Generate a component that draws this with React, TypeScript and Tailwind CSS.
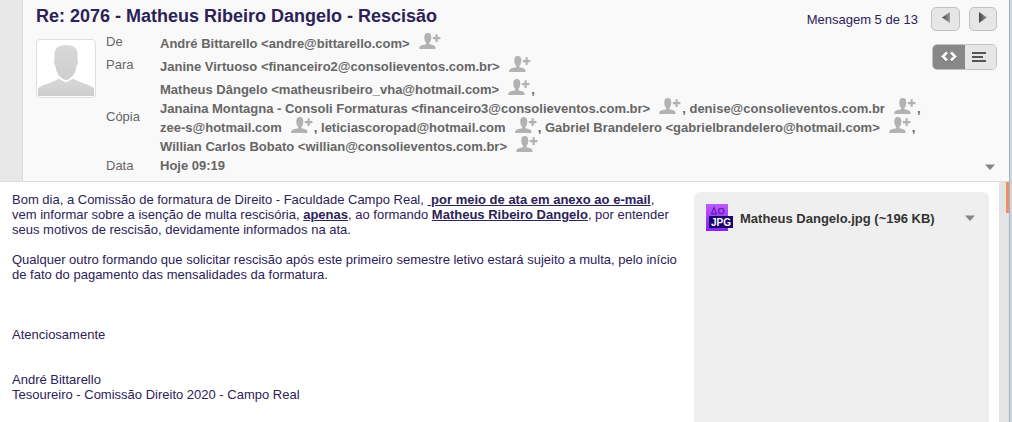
import React from "react";

type Contact = { label: string; suffix?: string };

function AddContact({ name }: { name: string }) {
  return (
    <button
      type="button"
      aria-label={`Adicionar ${name} aos contatos`}
      className="-mt-1 ml-2 inline-block h-4 w-6 align-[-1px]"
    >
      <svg viewBox="0 0 24 16" className="block h-4 w-6" fill="#b2b2b2">
        <path d="M9.800 0C7.500 0 6.300 1.500 6.300 4.200C6.300 6.800 7 8.800 8.200 9.800V11.200C5.500 11.700 1.500 12.500 1.300 14.500V16H17.500V14.500C17.300 12.500 14 11.700 11.400 11.200V9.800C12.600 8.800 13.300 6.800 13.300 4.200C13.300 1.500 12.100 0 9.800 0Z" />
        <path d="M17.500 1.300h2.200v2.700h2.700v2.200h-2.700v2.700h-2.200V6.200h-2.700V4h2.700Z" />
      </svg>
    </button>
  );
}

function Person({ label, suffix }: Contact) {
  return (
    <>
      <span className="whitespace-nowrap">
        <a href={`mailto:${label}`}>{label}</a>
        <AddContact name={label} />
        {suffix}
      </span>{" "}
    </>
  );
}

const copies: Contact[] = [
  { label: "Janaina Montagna - Consoli Formaturas <financeiro3@consolieventos.com.br>", suffix: "," },
  { label: "denise@consolieventos.com.br", suffix: "," },
  { label: "zee-s@hotmail.com", suffix: "," },
  { label: "leticiascoropad@hotmail.com", suffix: "," },
  { label: "Gabriel Brandelero <gabrielbrandelero@hotmail.com>", suffix: "," },
  { label: "Willian Carlos Bobato <willian@consolieventos.com.br>" },
];

function Avatar() {
  return (
    <div className="mt-[7px] h-[59px] w-15 shrink-0 overflow-hidden rounded border border-[#dedede] bg-white p-px">
      <svg viewBox="0 0 56 55" className="block h-full w-full" role="img" aria-label="Foto do contato">
        <defs>
          <linearGradient id="avatar" x2="0" y2="1">
            <stop stopColor="#d8d8d8" />
            <stop offset="1" stopColor="#cecece" />
          </linearGradient>
        </defs>
        <path
          fill="url(#avatar)"
          d="M28 4C21 4 16.500 7 16.500 13V18.500C15.300 19.500 16 24 17.500 25C18 30 19.500 33 22 35.500C24 37.500 26 39 28 39C30 39 32 37.500 34 35.500C36.500 33 38 30 38.500 25C40 24 40.700 19.500 39.500 18.500V12C39.500 7 35 4 28 4Z"
        />
        <path
          fill="url(#avatar)"
          d="M20.500 37.500C17 41 7 42.500 0 47V55H56V47C49 42.500 39 41 35.500 37.500L28 41.500Z"
        />
      </svg>
    </div>
  );
}

function CaretDown() {
  return (
    <svg viewBox="0 0 10 6" className="block h-1.5 w-2.5">
      <path d="M0 .5h10L5 6Z" fill="#858585" />
    </svg>
  );
}

function MessageNav() {
  return (
    <nav className="flex items-center gap-[9px] pt-[7px]">
      <span className="mr-1">Mensagem 5 de 13</span>
      <button
        type="button"
        aria-label="Mensagem anterior"
        className="flex h-6 w-[29px] items-center justify-center rounded-[5px] border border-[#c2c2c2] bg-[#e6e6e6]"
      >
        <svg viewBox="0 0 8 11" className="-mt-1 h-[11px] w-2">
          <defs>
            <linearGradient id="arrow">
              <stop stopColor="#444" />
              <stop offset="1" stopColor="#999" />
            </linearGradient>
          </defs>
          <path d="M8 0v11L0 5.500Z" fill="url(#arrow)" />
        </svg>
      </button>
      <button
        type="button"
        aria-label="Próxima mensagem"
        className="flex h-6 w-7 items-center justify-center rounded-[5px] border border-[#c2c2c2] bg-[#e6e6e6]"
      >
        <svg viewBox="0 0 8 11" className="-mt-1 h-[11px] w-2">
          <path d="M0 0v11l8-5.500Z" fill="url(#arrow)" />
        </svg>
      </button>
    </nav>
  );
}

function ViewToggle() {
  return (
    <div className="mt-3 flex h-[26px] overflow-hidden rounded-[5px] border border-[#c2c2c2]">
      <button
        type="button"
        aria-label="Exibir em HTML"
        className="flex w-8 items-center justify-center bg-[#888]"
      >
        <svg viewBox="0 0 18 12" className="h-3 w-[18px]" fill="none" strokeWidth="2.600">
          <path d="M7 2.500 3 6.500l4 4M11 2.500l4 4-4 4" stroke="#666" />
          <path d="M7 1.500 3 5.500l4 4M11 1.500l4 4-4 4" stroke="#fff" />
        </svg>
      </button>
      <button
        type="button"
        aria-label="Exibir em texto simples"
        className="flex w-[31px] items-center justify-center bg-[#e6e6e6] pr-1"
      >
        <svg viewBox="0 0 14 10" className="h-2.5 w-3.5" fill="#555">
          <path d="M0 0h14v2H0ZM0 4h11v2H0ZM0 8h14v2H0Z" />
        </svg>
      </button>
    </div>
  );
}

function Header() {
  return (
    <header className="flex border-b border-[#dcdcdc] bg-[#f9f9f9]">
      <div className="w-[23px] shrink-0 border-r border-[#dadada] bg-[#e8e8e8]" />
      <div className="min-w-0 flex-1 pr-3 pl-[13px]">
        <div className="flex min-h-8 items-start justify-between">
          <h1 className="pt-1 text-[18px] leading-6 font-bold">
            Re: 2076 - Matheus Ribeiro Dangelo - Rescisão
          </h1>
          <MessageNav />
        </div>
        <div className="flex">
          <div className="flex min-w-0 flex-1 gap-2.5 pb-[5px] text-[#666]">
            <Avatar />
            <dl className="grid flex-1 grid-cols-[54px_1fr]">
              <dt className="pt-0.5">De</dt>
              <dd className="leading-[23px] font-bold">
                <Person label="André Bittarello <andre@bittarello.com>" />
              </dd>
              <dt className="pt-0.5">Para</dt>
              <dd className="leading-[23px] font-bold">
                <div>
                  <Person label="Janine Virtuoso <financeiro2@consolieventos.com.br>" />
                </div>
                <div>
                  <Person label="Matheus Dângelo <matheusribeiro_vha@hotmail.com>" suffix="," />
                </div>
              </dd>
              <dt className="pt-2">Cópia</dt>
              <dd className="-mt-0.5 leading-[19px] font-bold">
                {copies.map((c) => (
                  <Person key={c.label} {...c} />
                ))}
              </dd>
              <dt className="leading-5">Data</dt>
              <dd className="leading-5 font-bold">Hoje 09:19</dd>
            </dl>
          </div>
          <div className="flex shrink-0 flex-col items-end pb-[11px]">
            <ViewToggle />
            <button type="button" aria-label="Mais detalhes" className="mt-auto mr-0.5">
              <CaretDown />
            </button>
          </div>
        </div>
      </div>
    </header>
  );
}

function Attachments() {
  return (
    <aside className="mt-2.5 w-[295px] shrink-0 rounded-t-md bg-[#efefef]">
      <div className="flex items-center pt-3 pr-3.5 pl-[11px]">
        <svg viewBox="0 0 28 28" className="h-7 w-7" aria-hidden="true">
          <defs>
            <linearGradient id="file" x2="0" y2="1">
              <stop stopColor="#bd5cff" />
              <stop offset="1" stopColor="#8b20f0" />
            </linearGradient>
          </defs>
          <path d="M1 0h22v27H1Z" fill="url(#file)" />
          <path d="M9 3.800 11.500 9.700H6.500Z" fill="none" stroke="#6a22b4" strokeWidth="1.400" />
          <circle cx="16.200" cy="7" r="2.600" fill="none" stroke="#6a22b4" strokeWidth="1.400" />
          <path d="M4 12h24v12H4Z" fill="#19006f" />
          <text
            x="16"
            y="21.500"
            textAnchor="middle"
            fill="#fff"
            className="font-['Liberation_Sans',sans-serif] text-[10px] font-bold"
          >
            JPG
          </text>
        </svg>
        <a href="#anexo" className="ml-[7px] font-bold text-[#333]">
          Matheus Dangelo.jpg (~196 KB)
        </a>
        <button type="button" aria-label="Opções do anexo" className="ml-auto">
          <CaretDown />
        </button>
      </div>
    </aside>
  );
}

export default function App() {
  return (
    <div className="flex min-h-screen bg-white font-['Liberation_Sans',Arial,sans-serif] text-[13px] leading-[15px] text-[#2c2257]">
      <div className="flex min-w-0 flex-1 flex-col">
        <Header />
        <main className="flex flex-1">
          <article className="min-w-0 flex-1 space-y-[15px] pt-2.5 pr-3.5 pl-3">
            <p>
              Bom dia, a Comissão de formatura de Direito - Faculdade Campo Real,{" "}
              <b className="underline">&nbsp;por meio de ata em anexo ao e-mail</b>, vem informar
              sobre a isenção de multa rescisória, <b className="underline">apenas</b>, ao formando{" "}
              <b className="underline">Matheus Ribeiro Dangelo</b>, por entender seus motivos de
              rescisão, devidamente informados na ata.
            </p>
            <p>
              Qualquer outro formando que solicitar rescisão após este primeiro semestre letivo
              estará sujeito a multa, pelo início de fato do pagamento das mensalidades da
              formatura.
            </p>
            <p className="pt-[30px]">Atenciosamente</p>
            <p className="pt-[15px]">
              André Bittarello
              <br />
              Tesoureiro - Comissão Direito 2020 - Campo Real
            </p>
          </article>
          <Attachments />
          <div className="ml-2.5 flex w-2.5 shrink-0 justify-end bg-[#e4e4e4]">
            <div className="h-[31px] w-[3px] bg-[#f08c66]" />
          </div>
        </main>
      </div>
      <div className="w-[3px] shrink-0 border-l border-[#a9b0b8] bg-[#cdd6dc]" />
    </div>
  );
}
